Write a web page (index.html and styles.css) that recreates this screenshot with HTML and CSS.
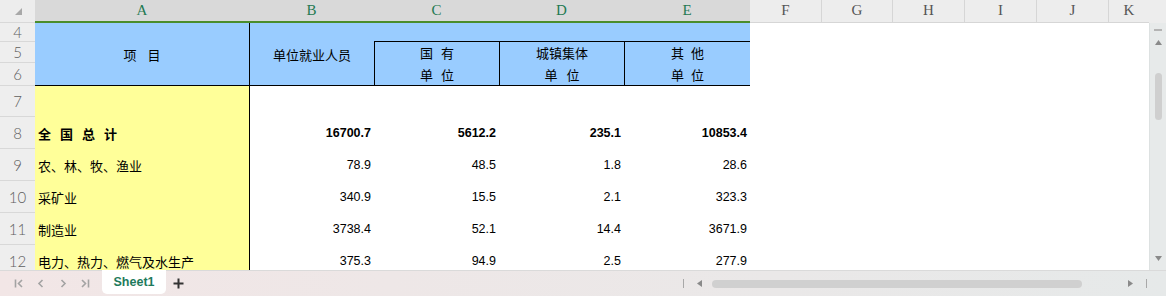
FILE: index.html
```html
<!DOCTYPE html>
<html lang="zh-CN">
<head>
<meta charset="UTF-8" />
<meta name="viewport" content="width=device-width, initial-scale=1" />
<title>Sheet1</title>

<link rel="stylesheet" href="styles.css">
</head>

<body>
<div class="app">

<div class="main">
  <div class="sheet">
    <!-- cabeçalho das colunas -->
    <div class="corner">
      <svg width="7" height="7" viewBox="0 0 7 7"><polygon points="7,0 7,7 0,7" fill="#a8a8a8"/></svg>
    </div>
    <div class="colhead sel">A</div>
    <div class="colhead sel">B</div>
    <div class="colhead sel">C</div>
    <div class="colhead sel">D</div>
    <div class="colhead sel">E</div>
    <div class="colhead">F</div>
    <div class="colhead">G</div>
    <div class="colhead">H</div>
    <div class="colhead">I</div>
    <div class="colhead">J</div>
    <div class="colhead last">K</div>

    <!-- linhas 4 a 6: cabeçalho da tabela -->
    <div class="rownum">4</div>
    <div class="cell head head-a"><span class="sp-a">项 目</span></div>
    <div class="cell head head-b">单位就业人员</div>
    <div class="cell head head-top"></div>

    <div class="rownum">5</div>
    <div class="cell head head-sub"><span class="sp-c">国 有</span><span class="sp-c">单 位</span></div>
    <div class="cell head head-sub"><span>城镇集体</span><span class="sp-d">单 位</span></div>
    <div class="cell head head-sub"><span class="sp-e">其 他</span><span class="sp-e">单 位</span></div>

    <div class="rownum">6</div>

    <!-- linha 7 -->
    <div class="rownum">7</div>
    <div class="cell label"></div>
    <div class="cell num col-b"></div>
    <div class="cell num"></div>
    <div class="cell num"></div>
    <div class="cell num"></div>

    <!-- linha 8 -->
    <div class="rownum">8</div>
    <div class="cell label total">全国总计</div>
    <div class="cell num col-b total">16700.7</div>
    <div class="cell num total">5612.2</div>
    <div class="cell num total">235.1</div>
    <div class="cell num total">10853.4</div>

    <!-- linha 9 -->
    <div class="rownum">9</div>
    <div class="cell label">农、林、牧、渔业</div>
    <div class="cell num col-b">78.9</div>
    <div class="cell num">48.5</div>
    <div class="cell num">1.8</div>
    <div class="cell num">28.6</div>

    <!-- linha 10 -->
    <div class="rownum">10</div>
    <div class="cell label">采矿业</div>
    <div class="cell num col-b">340.9</div>
    <div class="cell num">15.5</div>
    <div class="cell num">2.1</div>
    <div class="cell num">323.3</div>

    <!-- linha 11 -->
    <div class="rownum">11</div>
    <div class="cell label">制造业</div>
    <div class="cell num col-b">3738.4</div>
    <div class="cell num">52.1</div>
    <div class="cell num">14.4</div>
    <div class="cell num">3671.9</div>

    <!-- linha 12 -->
    <div class="rownum">12</div>
    <div class="cell label">电力、热力、燃气及水生产</div>
    <div class="cell num col-b">375.3</div>
    <div class="cell num">94.9</div>
    <div class="cell num">2.5</div>
    <div class="cell num">277.9</div>
  </div>

  <div class="vscroll">
    <div class="vdash"></div>
    <svg class="varrow" width="7" height="5" viewBox="0 0 7 5"><polygon points="3.5,0 7,5 0,5" fill="#8a8a8a"/></svg>
    <div class="vthumb"></div>
    <svg class="varrow down" width="7" height="5" viewBox="0 0 7 5"><polygon points="0,0 7,0 3.5,5" fill="#8a8a8a"/></svg>
  </div>
</div>

<div class="tabbar">
  <div class="nav">
    <span class="navbtn"><svg width="10" height="11" viewBox="0 0 10 11"><path d="M1.5 1.5v8M8 2L4.5 5.5 8 9" fill="none" stroke="#a3a3a3" stroke-width="1.6"/></svg></span>
    <span class="navbtn"><svg width="10" height="11" viewBox="0 0 10 11"><path d="M6.5 2L3 5.5 6.5 9" fill="none" stroke="#a3a3a3" stroke-width="1.6"/></svg></span>
    <span class="navbtn"><svg width="10" height="11" viewBox="0 0 10 11"><path d="M3.5 2L7 5.5 3.5 9" fill="none" stroke="#a3a3a3" stroke-width="1.6"/></svg></span>
    <span class="navbtn"><svg width="10" height="11" viewBox="0 0 10 11"><path d="M2 2l3.5 3.5L2 9M8.5 1.5v8" fill="none" stroke="#a3a3a3" stroke-width="1.6"/></svg></span>
  </div>
  <div class="tab">Sheet1</div>
  <span class="addtab"><svg width="11" height="11" viewBox="0 0 11 11"><path d="M5.5 0.5v10M0.5 5.5h10" stroke="#333" stroke-width="2"/></svg></span>

  <div class="hscroll">
    <span class="tick"></span>
    <svg class="harrow left" width="5" height="7" viewBox="0 0 5 7"><polygon points="0,3.5 5,0 5,7" fill="#8a8a8a"/></svg>
    <div class="hthumb"></div>
    <svg class="harrow right" width="5" height="7" viewBox="0 0 5 7"><polygon points="5,3.5 0,0 0,7" fill="#8a8a8a"/></svg>
    <span class="tick end"></span>
  </div>
</div>

</div>
</body>
</html>
```

FILE: styles.css
```css
body {
  margin: 0;
  font-family: "Liberation Sans", Arial, sans-serif;
  background-color: white;
  color: black;
}

.app {
  width: 1166px;
  height: 296px;
  display: flex;
  flex-direction: column;
  overflow: hidden;
}

.main {
  display: flex;
  height: 270px;
  background-color: #ededed;
}

/* planilha */
.sheet {
  display: grid;
  grid-template-columns: 35px 214px 125px 125px 125px 126px 72px 71px 72px 72px 72px 40px;
  grid-template-rows: 23px 19px 21px 23px 31px repeat(5, 32px);
  width: 1149px;
  height: 270px;
  overflow: hidden;
  background-color: white;
}

.sheet > div {
  box-sizing: border-box;
}

.corner {
  background-color: #ededed;
  border-bottom: 1px solid #d8d8d8;
  padding: 8px 0 0 15px;
}

.corner svg {
  display: block;
}

.colhead {
  display: flex;
  align-items: center;
  justify-content: center;
  padding-bottom: 1px;
  font-family: "Liberation Serif", "Times New Roman", serif;
  font-size: 15px;
  color: #555;
  background-color: #ededed;
  border-bottom: 1px solid #d6d6d6;
  border-right: 1px solid #d6d6d6;
}

.colhead.sel {
  background-color: #d9d9d9;
  color: #1f7a52;
  border-right: none;
  border-bottom: 2px solid #4a8d2c;
  padding-bottom: 0;
}

.colhead.last {
  border-right: none;
}

.rownum {
  grid-column: 1;
  display: flex;
  align-items: center;
  justify-content: center;
  background-color: #eeeeee;
  border-bottom: 1px solid #d8d8d8;
  font-family: Lato, "Liberation Sans", sans-serif;
  font-weight: 300;
  font-size: 15px;
  color: #5e5e5e;
}

.cell {
  display: flex;
  align-items: center;
  font-family: "Noto Sans CJK SC", "Liberation Sans", sans-serif;
  font-size: 13px;
  white-space: nowrap;
}

/* cabeçalho azul */
.head {
  background-color: #99ccff;
  justify-content: center;
}

.head-a {
  grid-row: span 3;
  border-bottom: 1px solid black;
}

.head-b {
  grid-row: span 3;
  border-left: 1px solid black;
  border-bottom: 1px solid black;
}

.head-top {
  grid-column: span 3;
  border-bottom: 1px solid black;
}

.head-sub {
  grid-row: span 2;
  flex-direction: column;
  align-items: stretch;
  border-left: 1px solid black;
  border-bottom: 1px solid black;
}

.head-sub span {
  flex: 1;
  display: flex;
  align-items: center;
  justify-content: center;
}

.sp-a {
  word-spacing: 8px;
}

.sp-c {
  word-spacing: 5px;
}

.sp-d {
  word-spacing: 6px;
}

.sp-e {
  word-spacing: 4px;
}

/* corpo */
.label {
  background-color: #ffff99;
  padding-left: 3px;
}

.label.total {
  font-weight: bold;
  letter-spacing: 9px;
}

.num {
  justify-content: flex-end;
  padding-right: 3px;
  font-family: "Liberation Sans", Arial, sans-serif;
  font-size: 12.5px;
}

.num.total {
  font-weight: bold;
}

.col-b {
  border-left: 1px solid black;
}

/* barra de rolagem vertical */
.vscroll {
  width: 17px;
  margin-top: 23px;
  box-sizing: border-box;
  background-color: #e7eaea;
  border-left: 1px solid #dde1e1;
  display: flex;
  flex-direction: column;
  align-items: center;
}

.vdash {
  width: 8px;
  height: 2px;
  margin-top: 6px;
  background-color: #b4b4b4;
}

.varrow {
  display: block;
  margin-top: 9px;
}

.vthumb {
  width: 7px;
  height: 47px;
  margin-top: 28px;
  border-radius: 4px;
  background-color: #cfcfcf;
}

.varrow.down {
  margin-top: auto;
  margin-bottom: 9px;
}

/* abas */
.tabbar {
  height: 26px;
  display: flex;
  align-items: center;
  background: linear-gradient(to right, #f2e6e6, #e6e9e9);
  border-top: 1px solid #dadada;
  box-sizing: border-box;
}

.nav {
  display: flex;
  padding-left: 8px;
}

.navbtn {
  width: 22px;
  display: flex;
  justify-content: center;
}

.navbtn svg,
.addtab svg {
  display: block;
}

.tab {
  align-self: flex-start;
  margin-top: -1px;
  margin-left: 6px;
  width: 64px;
  height: 24px;
  background-color: white;
  border-radius: 0 0 5px 5px;
  display: flex;
  align-items: center;
  justify-content: center;
  font-size: 12.5px;
  font-weight: bold;
  color: #1e7a5c;
}

.addtab {
  width: 24px;
  display: flex;
  justify-content: center;
}

.hscroll {
  margin-left: auto;
  margin-right: 19px;
  display: flex;
  align-items: center;
}

.tick {
  width: 1px;
  height: 9px;
  background-color: #a8a8a8;
}

.harrow {
  display: block;
}

.harrow.left {
  margin-left: 13px;
}

.hthumb {
  width: 370px;
  height: 8px;
  margin-left: 10px;
  border-radius: 4px;
  background-color: #d0d0d0;
}

.harrow.right {
  margin-left: 46px;
}

.tick.end {
  margin-left: 13px;
}
```
